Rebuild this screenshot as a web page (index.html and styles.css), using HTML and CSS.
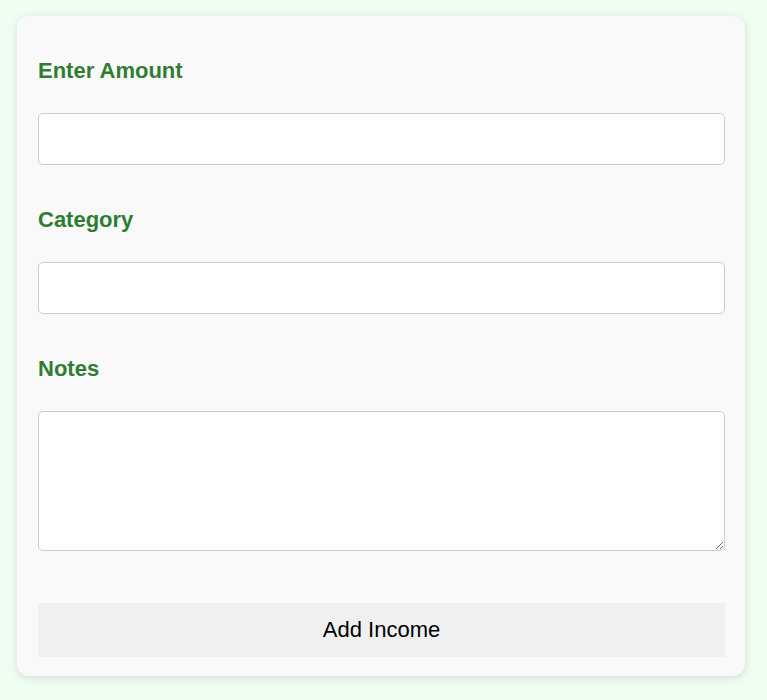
FILE: index.html
```html
<!DOCTYPE html>
<html>
<head>
<meta charset="utf-8">
<link rel="stylesheet" href="styles.css">
</head>
<body>
<div class="card">
  <label class="label first" for="amount">Enter Amount</label>
  <input class="field" id="amount" type="number">
  <label class="label" for="category">Category</label>
  <input class="field" id="category" type="text">
  <label class="label" for="notes">Notes</label>
  <textarea class="field area" id="notes"></textarea>
  <button class="btn" type="button">Add Income</button>
</div>
</body>
</html>
```
FILE: styles.css
```css
html, body {
  margin: 0;
  padding: 0;
  background: #f0fdf1;
  font-family: "Liberation Sans", Arial, sans-serif;
}
body {
  padding: 16px 22px 24px 17px;
}
.card {
  background: #f9f9f9;
  border-radius: 12px;
  box-shadow: 0 2px 8px rgba(0, 0, 0, 0.12);
  padding: 0 20px 19px 21px;
  overflow: hidden;
}
.label {
  display: block;
  color: #2e7d32;
  font-weight: bold;
  font-size: 22px;
  line-height: 25px;
  margin: 0 0 30px;
}
.label.first {
  margin-top: 42px;
}
.field {
  display: block;
  box-sizing: border-box;
  width: 100%;
  height: 52px;
  margin: 0 0 42px;
  border: 1px solid #cccccc;
  border-radius: 5px;
  background: #ffffff;
  font-family: inherit;
  font-size: 16px;
  padding: 10px;
}
.area {
  height: 140px;
  resize: vertical;
  margin-bottom: 0;
}
.btn {
  display: block;
  width: 100%;
  height: 54px;
  margin-top: 52px;
  border: none;
  border-radius: 0;
  background: #f0f0f0;
  color: #000000;
  font-family: inherit;
  font-size: 22px;
}
```
